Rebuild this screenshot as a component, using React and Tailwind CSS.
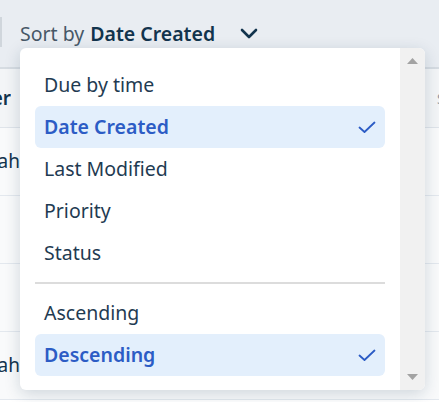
import React from 'react';

const font = { fontFamily: '"Noto Sans", "Segoe UI", sans-serif' };

const Check = () => (
  <svg width="18" height="13" viewBox="0 0 18 13" fill="none">
    <path d="M1.5 6.5 L6.5 11 L16.5 1.5" stroke="#2c5cc5" strokeWidth="1.8" strokeLinecap="round" strokeLinejoin="round" />
  </svg>
);

const Item = ({ label, selected }) => (
  <div
    className={
      selected
        ? 'flex h-[42px] items-center justify-between rounded-md bg-[#e3effc] pl-[9px] pr-[9px] text-[19.5px] font-semibold text-[#2c5cc5]'
        : 'flex h-[42px] items-center pl-[9px] text-[19.5px] text-[#1f3b52]'
    }
  >
    <span>{label}</span>
    {selected && <Check />}
  </div>
);

const rows = ['Sarah', '', '', 'Sarah'];

export default function App() {
  const sortFields = ['Due by time', 'Date Created', 'Last Modified', 'Priority', 'Status'];

  return (
    <div className="relative h-[402px] w-[439px] overflow-hidden bg-white" style={font}>
      {/* toolbar */}
      <div className="flex h-[67px] items-center bg-[#e9edf2]">
        <div className="mt-[-3px] h-[30px] w-[2px] bg-[#d0d6dc]" />
        <div className="ml-[18px] mt-[1px] flex items-center text-[19.5px] text-[#475867]">
          <span>Sort by</span>
          <span className="ml-[6px] font-semibold text-[#12344d]">Date Created</span>
          <svg className="ml-[25px]" width="18" height="12" viewBox="0 0 18 12" fill="none">
            <path d="M2 2 L9 9 L16 2" stroke="#12344d" strokeWidth="2.6" strokeLinecap="round" strokeLinejoin="round" />
          </svg>
        </div>
      </div>

      {/* table behind */}
      <div className="border-t-2 border-[#d6dce2]">
        <div className="flex h-[59px] items-center justify-between border-b border-[#dfe4ea] bg-[#f3f5f7]">
          <div className="flex w-[11px] justify-end overflow-hidden whitespace-nowrap text-[19px] font-semibold text-[#12344d]">
            <span className="shrink-0">Requester</span>
          </div>
          <div className="w-[2px] overflow-hidden whitespace-nowrap text-[14px] text-[#8a98a6]">Status</div>
        </div>
        {rows.map((r, i) => (
          <div key={i} className="flex h-[68px] items-center border-b border-[#e3e8ee] bg-[#f9fafb]">
            <div className="flex w-[20px] justify-end overflow-hidden whitespace-nowrap text-[19px] text-[#12344d]">
              <span className="shrink-0">{r}</span>
            </div>
          </div>
        ))}
      </div>

      {/* dropdown menu */}
      <div className="absolute left-[20px] top-[48px] flex h-[342px] w-[405px] overflow-hidden rounded-md bg-white shadow-[0_4px_16px_rgba(18,52,77,0.18)]">
        <div className="flex-1 pb-[15px] pl-[15px] pr-[15px] pt-[16px]">
          {sortFields.map((f) => (
            <Item key={f} label={f} selected={f === 'Date Created'} />
          ))}
          <div className="my-[8px] h-[2px] bg-[#dcdcdc]" />
          <Item label="Ascending" />
          <Item label="Descending" selected />
        </div>
        <div className="flex w-[25px] flex-col items-center justify-between bg-[#f1f1f1] pb-[10px] pt-[10px]">
          <svg width="11" height="6" viewBox="0 0 11 6"><path d="M0 6 L5.5 0 L11 6 Z" fill="#a3a3a3" /></svg>
          <svg width="11" height="6" viewBox="0 0 11 6"><path d="M0 0 L5.5 6 L11 0 Z" fill="#a3a3a3" /></svg>
        </div>
      </div>
    </div>
  );
}
